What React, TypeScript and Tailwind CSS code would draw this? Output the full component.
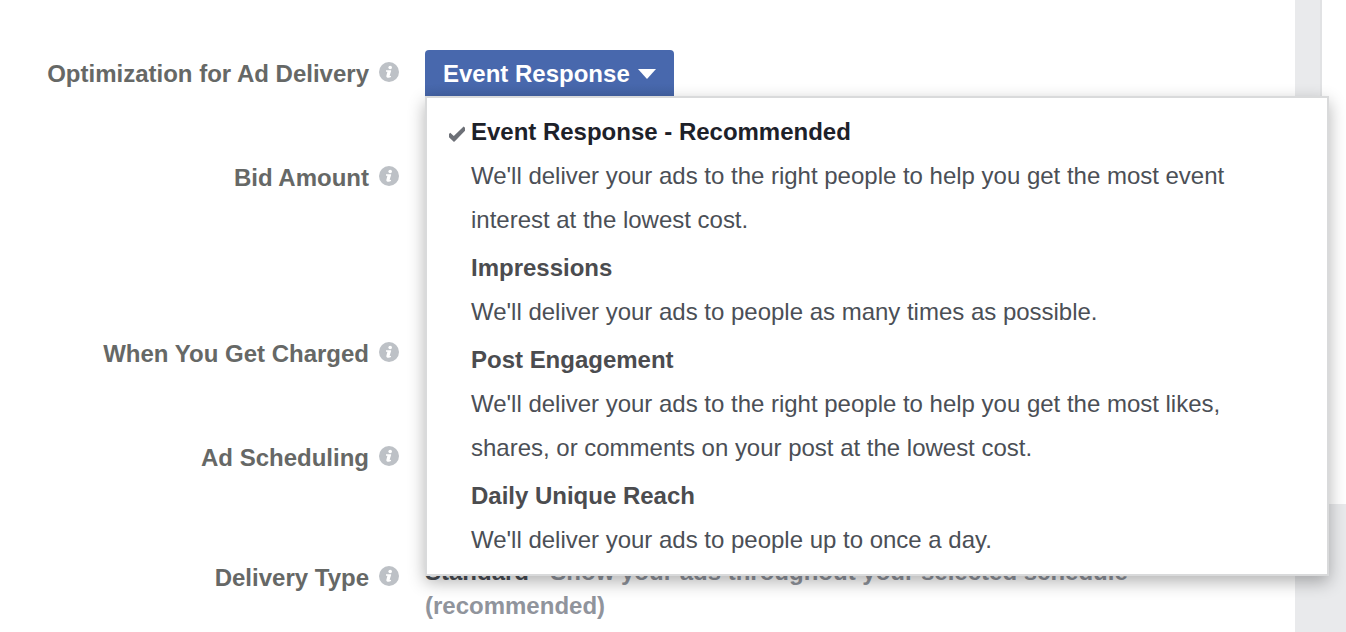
import React, { useState } from "react";

interface Option {
  id: string;
  title: string;
  lines: string[];
  recommended?: boolean;
}

const OPTIONS: Option[] = [
  {
    id: "event",
    title: "Event Response",
    lines: ["We'll deliver your ads to the right people to help you get the most event", "interest at the lowest cost."],
    recommended: true,
  },
  {
    id: "impressions",
    title: "Impressions",
    lines: ["We'll deliver your ads to people as many times as possible."],
  },
  {
    id: "engagement",
    title: "Post Engagement",
    lines: ["We'll deliver your ads to the right people to help you get the most likes,", "shares, or comments on your post at the lowest cost."],
  },
  {
    id: "reach",
    title: "Daily Unique Reach",
    lines: ["We'll deliver your ads to people up to once a day."],
  },
];

const InfoIcon = () => (
  <svg viewBox="0 0 20 20" className="w-5 h-5 mb-[5px] shrink-0">
    <circle cx="10" cy="10" r="10" fill="#bdc1c6" />
    <circle cx="11.2" cy="5.5" r="1.8" fill="#fff" />
    <path d="M7 8.2h4.8l.4.5-1.5 4.9c-.1.5.2.6 1.3.1v1.3c-2 1.3-5.2 1-4.6-1.3l1-3.9H7z" fill="#fff" />
  </svg>
);

const CheckIcon = () => (
  <svg viewBox="0 0 18 18" className="w-[18px] h-[18px] mt-[15px] shrink-0">
    <path d="M1 9l1.2-1.2L5.8 11 15.6 1.4 17 2.8v3L7.6 15.4 6 17 1 12.2z" fill="#6d7077" />
  </svg>
);

interface FieldRowProps {
  label: string;
  height: string;
  children?: React.ReactNode;
}

const FieldRow: React.FC<FieldRowProps> = ({ label, height, children }) => (
  <div className={`flex shrink-0 items-start ${height}`}>
    <div className="flex w-[399px] h-[30px] items-center justify-end gap-2.5 font-bold text-[#666866] whitespace-nowrap">
      <span>{label}</span>
      <InfoIcon />
    </div>
    <div className="ml-[26px] flex-1">{children}</div>
  </div>
);

export default function App() {
  const [selected, setSelected] = useState("event");
  const [open, setOpen] = useState(true);
  const current = OPTIONS.find((o) => o.id === selected) ?? OPTIONS[0];

  return (
    <div className="flex w-[1346px] h-[632px] overflow-hidden bg-[#e9eaec] font-['Liberation_Sans',Arial,sans-serif] text-[24px] leading-7">
      <div className="flex w-[1295px] shrink-0 flex-col bg-white pt-[59px]">
        <FieldRow label="Optimization for Ad Delivery" height="h-[104px]">
          <div className="relative -mt-[9px] w-[249px]">
            <button
              onClick={() => setOpen(!open)}
              className="flex w-full h-[46px] items-center gap-2 rounded-t-[4px] bg-linear-to-b from-[#4868ad] from-75% to-[#4463a5] pl-[18px] pt-0.5 font-bold text-white whitespace-nowrap"
            >
              <span>{current.title}</span>
              <svg viewBox="0 0 18 10" className="w-[18px] h-2.5 shrink-0">
                <path d="M0 0h18L9 10z" fill="#fff" />
              </svg>
            </button>
            {open && (
              <ul className="absolute left-0 top-[46px] z-10 flex w-[904px] h-[480px] flex-col gap-1 border-2 border-[#d9dadb] bg-white py-3 leading-[44px] tracking-[-0.01px] shadow-[0_6px_16px_rgba(0,0,0,0.3)]">
                {OPTIONS.map((option) => (
                  <li
                    key={option.id}
                    onClick={() => setSelected(option.id)}
                    className="flex cursor-pointer pl-[21px] whitespace-nowrap"
                  >
                    <div className="w-[23px] shrink-0">{option.id === selected && <CheckIcon />}</div>
                    <div>
                      <div className={option.id === selected ? "font-bold text-[#1d2129]" : "font-bold text-[#4b4c4f]"}>
                        {option.title}
                        {option.recommended && " - Recommended"}
                      </div>
                      {option.lines.map((line) => (
                        <div key={line} className="text-[#4b4f56]">
                          {line}
                        </div>
                      ))}
                    </div>
                  </li>
                ))}
              </ul>
            )}
          </div>
        </FieldRow>
        <FieldRow label="Bid Amount" height="h-44" />
        <FieldRow label="When You Get Charged" height="h-[104px]" />
        <FieldRow label="Ad Scheduling" height="h-[120px]" />
        <FieldRow label="Delivery Type" height="h-14">
          <div className="-mt-2 font-bold leading-[34px] text-[#90949c] whitespace-nowrap">
            <span className="text-[#4b4f56]">Standard</span> - Show your ads throughout your selected schedule
            <br />
            (recommended)
          </div>
        </FieldRow>
      </div>
      {/* Right side panel */}
      <div className="flex-1">
        <div className="ml-[25px] h-[504px] border-l-2 border-[#e1e2e4] bg-white" />
      </div>
    </div>
  );
}
